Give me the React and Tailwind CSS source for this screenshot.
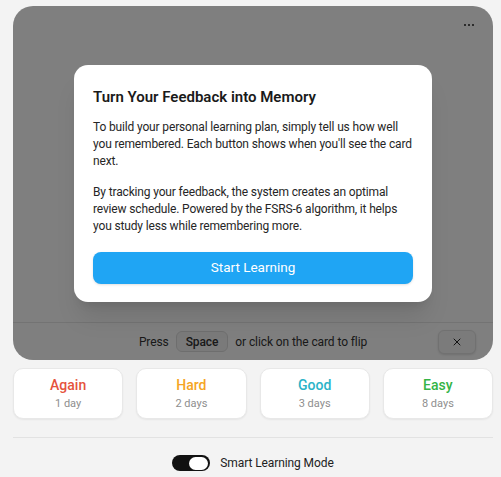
import React, { useState } from 'react';
import { X } from 'lucide-react';

const grades = [
    { label: 'Again', sub: '1 day', color: 'text-[#e5533d]' },
    { label: 'Hard', sub: '2 days', color: 'text-[#f5a524]' },
    { label: 'Good', sub: '3 days', color: 'text-[#2bb3c8]' },
    { label: 'Easy', sub: '8 days', color: 'text-[#34b446]' },
];

const App = () => {
    const [smart, setSmart] = useState(true);

    return (
        <div className="min-h-[477px] bg-[#f3f3f3] pl-[13px] pr-[8px] pt-[6px] font-['Roboto',sans-serif] text-[#1c1c1e]">
            <div className="relative h-[354px] rounded-[20px] bg-white overflow-hidden flex flex-col">
                <div className="flex-1 flex justify-end pr-[19px] pt-[18px]">
                    <div className="flex gap-[2px]">
                        <span className="w-[2px] h-[2px] rounded-full bg-[#222]" />
                        <span className="w-[2px] h-[2px] rounded-full bg-[#222]" />
                        <span className="w-[2px] h-[2px] rounded-full bg-[#222]" />
                    </div>
                </div>
                <div className="h-[38px] border-t border-[#e6e6e6] flex items-center justify-center relative text-[12px] tracking-[-0.1px] text-[#333]">
                    <span>Press</span>
                    <span className="mx-[7px] px-[9px] h-[21px] flex items-center rounded-[6px] border border-[#dcdcdc] bg-[#f5f5f5] font-medium">Space</span>
                    <span>or click on the card to flip</span>
                    <button className="absolute right-[17px] top-[7px] w-[38px] h-[24px] rounded-[6px] border border-[#e2e2e2] bg-[#f7f7f7] shadow-sm flex items-center justify-center">
                        <X className="w-[12px] h-[12px] text-[#222]" strokeWidth={2} />
                    </button>
                </div>

                <div className="absolute inset-0 bg-black/50 flex items-center justify-center">
                    <div className="w-[358px] bg-white rounded-[14px] px-[19px] pt-[22px] pb-[18px] shadow-xl">
                        <h2 className="text-[15px] font-semibold text-[#1a1a1a] leading-[20px]">Turn Your Feedback into Memory</h2>
                        <p className="mt-[12px] text-[12px] tracking-[-0.15px] leading-[17px] text-[#262626]">
                            To build your personal learning plan, simply tell us how well you remembered. Each button shows when you'll see the card next.
                        </p>
                        <p className="mt-[14px] text-[12px] tracking-[-0.15px] leading-[17px] text-[#262626]">
                            By tracking your feedback, the system creates an optimal review schedule. Powered by the FSRS-6 algorithm, it helps you study less while remembering more.
                        </p>
                        <button className="mt-[17px] w-full h-[32px] rounded-[8px] bg-[#1fa5f4] text-white text-[13.5px] shadow-sm">
                            Start Learning
                        </button>
                    </div>
                </div>
            </div>

            <div className="grid grid-cols-4 gap-[13px] mt-[8px]">
                {grades.map((g) => (
                    <button
                        key={g.label}
                        className="h-[51px] rounded-[10px] bg-white border border-[#e8e8e8] shadow-[0_1px_2px_rgba(0,0,0,0.06)] flex flex-col items-center justify-center"
                    >
                        <span className={`text-[14px] font-medium leading-[18px] ${g.color}`}>{g.label}</span>
                        <span className="text-[11px] leading-[14px] mt-[3px] text-[#8e8e8e]">{g.sub}</span>
                    </button>
                ))}
            </div>

            <div className="mt-[18px] border-t border-[#e2e2e2]" />

            <div className="flex items-center justify-center gap-[10px] pt-[16px]">
                <button
                    onClick={() => setSmart(!smart)}
                    className={`w-[38px] h-[16px] rounded-full p-[2px] flex items-center ${smart ? 'bg-[#111] justify-end' : 'bg-[#ccc] justify-start'}`}
                >
                    <span className="w-[19px] h-[13px] rounded-full bg-white" />
                </button>
                <span className="text-[12px] tracking-[-0.1px] text-[#222]">Smart Learning Mode</span>
            </div>
        </div>
    );
};

export default App;
